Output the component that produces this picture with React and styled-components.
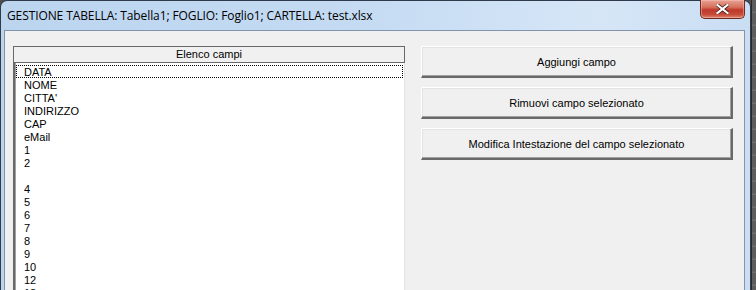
import React from 'react';
import styled, { createGlobalStyle } from 'styled-components';

const GlobalStyle = createGlobalStyle`
  html, body {
    margin: 0;
    padding: 0;
    background: #5a5a5a;
    overflow: hidden;
  }
`;

const Desktop = styled.div`
  display: flex;
  align-items: flex-start;
  width: 756px;
  height: 290px;
  overflow: hidden;
  background: #4e4e4e;
`;

const Window = styled.div`
  width: 751px;
  flex-shrink: 0;
  box-sizing: border-box;
  border: 1px solid #2f3b4a;
  border-bottom: none;
  border-radius: 7px 7px 0 0;
  background: linear-gradient(90deg, #bcd5ef 0%, #c3daf2 45%, #d6e6f7 80%, #c9ddf3 100%);
  display: flex;
  flex-direction: column;
  padding: 0 5px 0 3px;
`;

const TitleBar = styled.div`
  height: 29px;
  flex-shrink: 0;
  display: flex;
  align-items: flex-start;
  justify-content: space-between;
`;

const Title = styled.div`
  font-family: "Open Sans", "Liberation Sans", sans-serif;
  font-size: 12px;
  color: #000;
  padding: 6px 0 0 3px;
  letter-spacing: -0.1px;
`;

const CloseButton = styled.div`
  width: 45px;
  height: 19px;
  margin-top: -1px;
  box-sizing: border-box;
  border: 1px solid #6b2b22;
  border-top: none;
  border-radius: 0 0 5px 5px;
  background: linear-gradient(180deg, #e8a395 0%, #d6705c 40%, #c0392b 55%, #c64a36 80%, #dd8672 100%);
  display: flex;
  align-items: center;
  justify-content: center;
  box-shadow: inset 0 0 0 1px rgba(255, 200, 190, 0.45);
`;

const Client = styled.div`
  height: 270px;
  background: #f0f0f0;
  border: 1px solid #8094ad;
  border-bottom: none;
  display: grid;
  grid-template-columns: 392px 312px;
  column-gap: 16px;
  align-items: start;
  padding: 15px 0 0 8px;
  font-family: "Liberation Sans", Tahoma, sans-serif;
  font-size: 11px;
  color: #000;
`;

const ListPanel = styled.div`
  display: flex;
  flex-direction: column;
`;

const ListHeader = styled.div`
  height: 15px;
  line-height: 15px;
  text-align: center;
  border: 1px solid #696969;
  background: #f0f0f0;
`;

const ListBox = styled.div`
  height: 240px;
  background: #fff;
  border-left: 2px solid #696969;
  border-right: 1px solid #e3e3e3;
  padding: 2px 1px 0 1px;
  box-shadow: inset 1px 0 0 #a0a0a0;
`;

const ListItem = styled.div`
  height: 13px;
  line-height: 14px;
  padding-left: 8px;
  white-space: pre;
  box-sizing: border-box;
  outline: ${p => (p.focused ? '1px dotted #000' : 'none')};
  outline-offset: -1px;
`;

const ButtonColumn = styled.div`
  display: flex;
  flex-direction: column;
  gap: 9px;
`;

const Button = styled.button`
  height: 32px;
  width: 100%;
  margin: 0;
  background: #f0f0f0;
  font-family: "Liberation Sans", Tahoma, sans-serif;
  font-size: 11px;
  color: #000;
  border-style: solid;
  border-width: 1px 2px 2px 1px;
  border-color: #fff #696969 #696969 #fff;
  box-shadow: inset -1px -1px 0 #a0a0a0, inset 1px 1px 0 #e3e3e3;
  padding: 0;
  cursor: pointer;
`;

const FrameRight = styled.div`
  width: 5px;
  height: 290px;
  flex-shrink: 0;
  background: repeating-linear-gradient(180deg, #5d5d5d 0px, #5d5d5d 11px, #6e6e6e 12px, #6e6e6e 13px);
  border-left: 1px solid #2a2a2a;
`;

const fields = ['DATA', 'NOME', "CITTA'", 'INDIRIZZO', 'CAP', 'eMail', '1', '2', '', '4', '5', '6', '7', '8', '9', '10', '12', '13'];

const CloseIcon = () => (
  <svg width="13" height="10" viewBox="0 0 13 10">
    <path d="M1.5 1 L11.5 9 M11.5 1 L1.5 9" stroke="#3d1a14" strokeWidth="3.6" strokeLinecap="square" />
    <path d="M1.5 1 L11.5 9 M11.5 1 L1.5 9" stroke="#fff" strokeWidth="2.2" strokeLinecap="square" />
  </svg>
);

export default function App() {
  return (
    <Desktop>
      <GlobalStyle />
      <Window>
        <TitleBar>
          <Title>GESTIONE TABELLA: Tabella1; FOGLIO: Foglio1; CARTELLA: test.xlsx</Title>
          <CloseButton><CloseIcon /></CloseButton>
        </TitleBar>
        <Client>
          <ListPanel>
            <ListHeader>Elenco campi</ListHeader>
            <ListBox>
              {fields.map((f, i) => (
                <ListItem key={i} focused={i === 0}>{f}</ListItem>
              ))}
            </ListBox>
          </ListPanel>
          <ButtonColumn>
            <Button>Aggiungi campo</Button>
            <Button>Rimuovi campo selezionato</Button>
            <Button>Modifica Intestazione del campo selezionato</Button>
          </ButtonColumn>
        </Client>
      </Window>
      <FrameRight />
    </Desktop>
  );
}
